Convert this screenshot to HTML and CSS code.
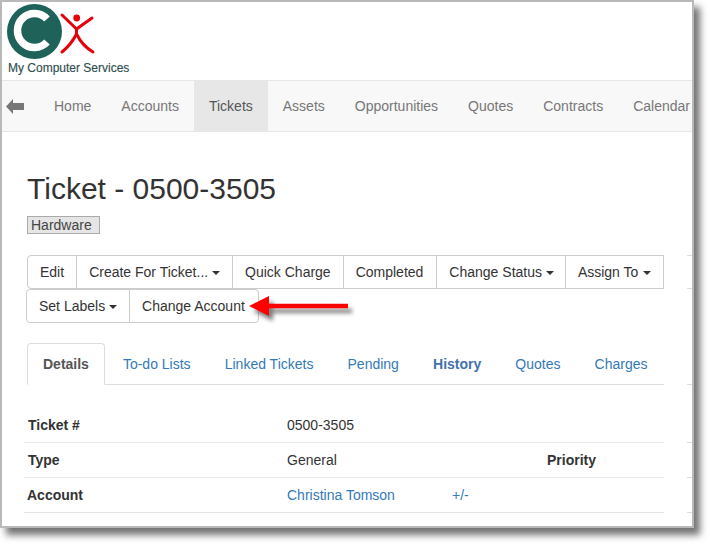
FILE: index.html
```html
<!DOCTYPE html>
<html lang="en">
<head>
<meta charset="utf-8">
<title>Ticket - 0500-3505</title>
<link rel="stylesheet" href="styles.css">
</head>
<body>
<div class="window">
  <header class="brand">
    <svg class="logo" width="100" height="62" viewBox="0 0 100 62">
      <circle cx="32.5" cy="29.5" r="27.5" fill="#1f6259"/>
      <path d="M45 17 A17 17 0 1 0 45 40" fill="none" stroke="#fff" stroke-width="7.5"/>
      <circle cx="74.7" cy="16" r="3.4" fill="#e5000b"/>
      <path d="M60 13 L74.5 27 L90 16 M74.5 27 L74.5 32 M60 50 C66 45 71 39 74.5 32 C78 39 84 46 91 50" fill="none" stroke="#e5000b" stroke-width="3" stroke-linecap="round" stroke-linejoin="round"/>
    </svg>
    <div class="brand-name">My Computer Services</div>
  </header>
  <nav class="navbar">
    <svg class="back" width="18" height="15" viewBox="0 0 18 15"><path d="M0 7.5 L7 0 V4 H18 V11 H7 V15 Z" fill="#777"/></svg>
    <a class="nav-link">Home</a>
    <a class="nav-link">Accounts</a>
    <a class="nav-link active">Tickets</a>
    <a class="nav-link">Assets</a>
    <a class="nav-link">Opportunities</a>
    <a class="nav-link">Quotes</a>
    <a class="nav-link">Contracts</a>
    <a class="nav-link">Calendar</a>
  </nav>
  <div class="body-row">
    <main class="content">
      <h1 class="title">Ticket - 0500-3505</h1>
      <span class="label">Hardware</span>
      <div class="toolbar">
        <div class="btn-row">
          <a class="btn first">Edit</a>
          <a class="btn">Create For Ticket... <i class="caret"></i></a>
          <a class="btn">Quick Charge</a>
          <a class="btn wide">Completed</a>
          <a class="btn narrow">Change Status <i class="caret"></i></a>
          <a class="btn">Assign To <i class="caret spaced"></i></a>
        </div>
        <div class="btn-row second">
          <a class="btn first">Set Labels <i class="caret"></i></a>
          <a class="btn last wide">Change Account</a>
          <svg class="pointer" width="110" height="36" viewBox="0 0 110 36">
            <defs><filter id="blur" x="-20%" y="-60%" width="140%" height="220%"><feGaussianBlur stdDeviation="2.2"/></filter></defs>
            <path d="M1 18 L21 8 V16 H100 V20 H21 V28 Z" transform="translate(4 5)" fill="#444" opacity=".7" filter="url(#blur)"/>
            <path d="M1 18 L21 8 V15.7 H100 V20.3 H21 V28 Z" fill="#f00"/>
          </svg>
        </div>
      </div>
      <ul class="tabs">
        <li class="tab active">Details</li>
        <li class="tab">To-do Lists</li>
        <li class="tab">Linked Tickets</li>
        <li class="tab">Pending</li>
        <li class="tab strong">History</li>
        <li class="tab">Quotes</li>
        <li class="tab">Charges</li>
      </ul>
      <div class="grid">
        <div class="row">
          <b class="cell-a inset">Ticket #</b><span class="cell-b">0500-3505</span>
        </div>
        <div class="row">
          <b class="cell-a inset">Type</b><span class="cell-b">General</span><b class="cell-d">Priority</b>
        </div>
        <div class="row">
          <b class="cell-a">Account</b><a class="cell-b link">Christina Tomson</a><a class="cell-c link">+/-</a>
        </div>
        <div class="row last-row">
          <b class="cell-a indent">Contact</b>
        </div>
      </div>
    </main>
    <aside class="edge">
      <i class="stub s1"></i><i class="stub s2"></i><i class="stub s3"></i><i class="stub s4"></i><i class="stub s5"></i><i class="stub s5"></i>
    </aside>
  </div>
</div>
</body>
</html>
```
FILE: styles.css
```css
* { box-sizing: border-box; }
html, body { margin: 0; padding: 0; background: #fff; }
body { width: 710px; height: 544px; overflow: hidden; font: 14px/20px "Liberation Sans", Arial, sans-serif; color: #333; }
.window { width: 694px; height: 528px; border: 2px solid #b9b9b9; background: #fff; overflow: hidden; box-shadow: 6px 7px 7px rgba(70,70,70,.75); }
.brand { height: 78px; position: relative; }
.logo { display: block; }
.brand-name { position: absolute; left: 6px; top: 59px; font-size: 12px; line-height: 14px; color: #2f4f50; -webkit-text-stroke: .15px #2f4f50; }
.navbar { height: 52px; display: flex; align-items: stretch; background: #f8f8f8; border-top: 1px solid #e7e7e7; border-bottom: 1px solid #e7e7e7; white-space: nowrap; overflow: hidden; }
.back { margin: 18px 15px 0 4px; flex: none; }
.nav-link { padding: 15px; color: #777; flex: none; }
.nav-link.active { background: #e7e7e7; color: #555; }
.body-row { display: flex; }
.content { width: 637px; margin-left: 25px; flex: none; }
.title { margin: 40px 0 0; font-size: 30px; line-height: 33px; font-weight: 400; color: #333; }
.label { display: block; width: 73px; height: 18px; margin-top: 11px; padding-left: 3px; background: #e5e5e5; border: 1px solid #aaa; line-height: 17px; color: #444; }
.toolbar { margin-top: 21px; }
.btn-row { display: flex; align-items: center; height: 34px; }
.btn-row.second { margin-left: -1px; }
.btn { display: block; height: 34px; padding: 6px 12px; border: 1px solid #ccc; margin-left: -1px; white-space: nowrap; color: #333; background: #fff; }
.btn.first { margin-left: 0; border-radius: 4px 0 0 4px; }
.btn.last { border-radius: 0 4px 4px 0; }
.btn.wide { padding-right: 13px; }
.btn.narrow { padding-right: 11px; }
.caret { display: inline-block; width: 0; height: 0; vertical-align: middle; border-top: 4px solid #333; border-left: 4px solid transparent; border-right: 4px solid transparent; }
.caret.spaced { margin-left: 1px; }
.pointer { margin-left: -11px; flex: none; }
.tabs { display: flex; list-style: none; margin: 20px 0 0; padding: 0; height: 42px; border-bottom: 1px solid #ddd; }
.tab { height: 42px; padding: 11px 15px 0; margin-right: 4.1px; color: #337ab7; white-space: nowrap; }
.tab.active { padding-top: 10px; border: 1px solid #ddd; border-bottom-color: #fff; border-radius: 4px 4px 0 0; color: #555; font-weight: 700; margin-right: 3px; }
.tab.strong { font-weight: 700; color: #3f72ae; }
.grid { margin: 23px 0 0 -3px; width: 640px; }
.row { display: grid; grid-template-columns: 263px 165px 95px 1fr; height: 35px; padding-top: 7px; border-bottom: 1px solid #e5e5e5; }
.row:first-child { height: 36px; padding-top: 8px; margin-top: -1px; }
.row.last-row { padding-top: 8px; }
.row b { font-weight: 700; color: #333; padding-left: 3px; }
.cell-a { grid-column: 1; }
.cell-b { grid-column: 2; }
.cell-c { grid-column: 3; }
.row .cell-d { grid-column: 4; padding-left: 0; }
.row b.inset { padding-left: 4px; }
.row b.indent { padding-left: 29px; }
.link { color: #337ab7; }
.edge { flex: none; margin-left: 23px; width: 5px; }
.stub { display: block; height: 1px; background: #ddd; }
.s1 { margin-top: 123px; }
.s2 { margin-top: 32px; }
.s3 { margin-top: 95px; }
.s4 { margin-top: 57px; }
.s5 { margin-top: 34px; }
```
